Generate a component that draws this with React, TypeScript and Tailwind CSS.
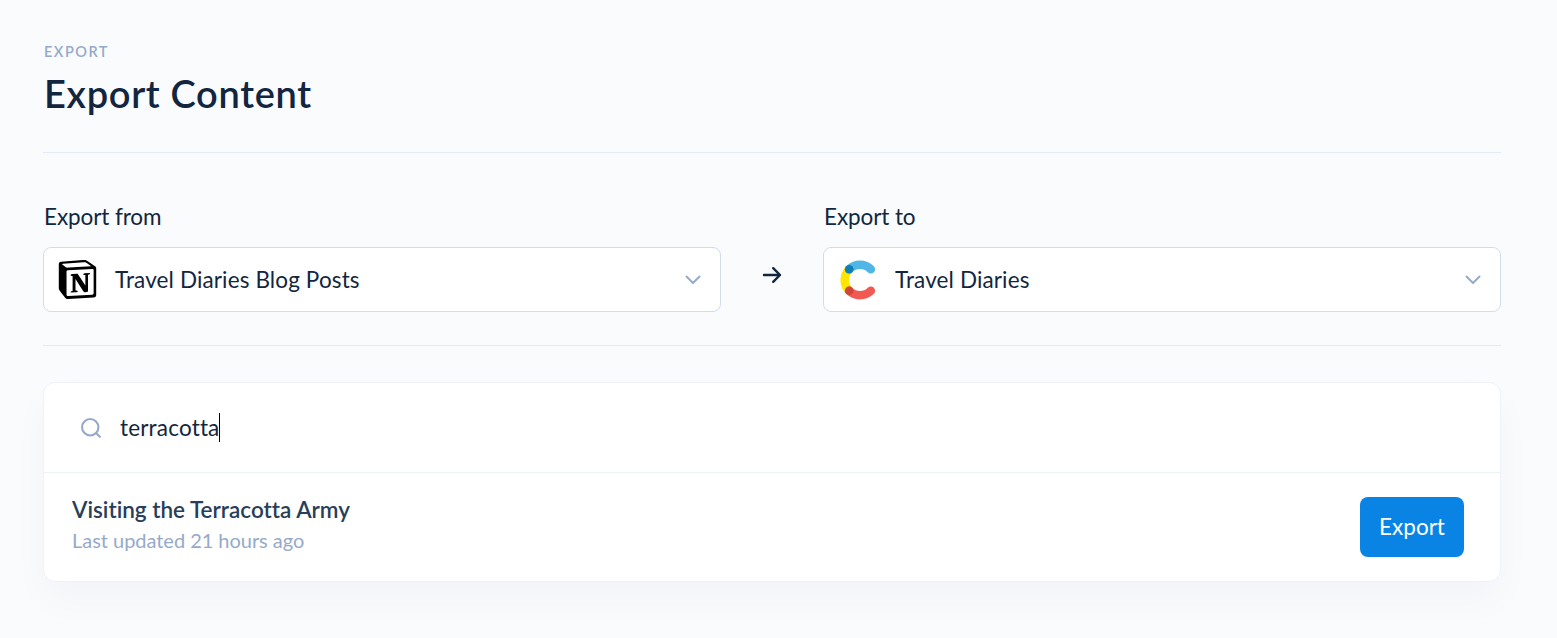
import { ReactNode } from "react";
import { SiNotion } from "react-icons/si";

function ContentfulLogo() {
  return (
    <svg width="40" height="40" viewBox="0 0 40 40" fill="none" strokeWidth="8.6" strokeLinecap="round" className="ml-[2px] shrink-0">
      <path d="M9.2 9.2A15.3 15.3 0 0 0 9.2 30.8" stroke="#ffe500" />
      <path d="M9.2 9.2A15.3 15.3 0 0 1 30.8 9.2" stroke="#50b6e6" />
      <path d="M9.2 30.8A15.3 15.3 0 0 0 30.8 30.8" stroke="#f15952" />
      <circle cx="9.2" cy="9.2" r="4.3" fill="#0f7fb8" />
      <circle cx="9.2" cy="30.8" r="4.3" fill="#cf473c" />
    </svg>
  );
}

function Chevron() {
  return (
    <svg width="16" height="10" viewBox="0 0 16 10" fill="none" stroke="#95aac9" strokeWidth="2" strokeLinecap="round" strokeLinejoin="round" className="shrink-0">
      <path d="M1.5 1.5 8 8l6.5-6.5" />
    </svg>
  );
}

function Picker({ label, logo, value }: { label: string; logo: ReactNode; value: string }) {
  return (
    <div className="w-[678px]">
      <div className="h-[30px] pl-px text-[22.5px] leading-[30px] tracking-[-0.1px]">{label}</div>
      <button className="mt-[15px] flex h-[65px] w-full items-center rounded-lg border border-[#d2ddec] bg-white pr-[19px] pl-[14px]">
        <span className="flex w-[57px] shrink-0 items-center">{logo}</span>
        <span className="flex-1 text-left text-[22.5px] tracking-[0.13px]">{value}</span>
        <Chevron />
      </button>
    </div>
  );
}

export default function App() {
  return (
    <main className="h-[638px] overflow-hidden bg-[#f9fbfd] pr-14 pl-[43px] font-['Lato',sans-serif] text-[#12263f] [font-variant-ligatures:none]">
      <header className="h-[153px] border-b border-[#e3ebf6] pt-[42px]">
        <div className="h-5 pl-px text-[14.5px] leading-5 font-semibold tracking-[1.5px] text-[#95aac9]">EXPORT</div>
        <h1 className="mt-[6px] pl-px text-[38px] leading-[50px] font-semibold tracking-[0.68px]">Export Content</h1>
      </header>

      <section className="flex h-[193px] border-b border-[#e3ebf6] pt-[49px]">
        <Picker label="Export from" value="Travel Diaries Blog Posts" logo={<SiNotion size={39} color="#000" />} />
        <div className="flex w-[102px] justify-center pt-16">
          <svg width="20" height="18" viewBox="0 0 20 18" fill="none" stroke="#12263f" strokeWidth="2.4" strokeLinecap="round" strokeLinejoin="round">
            <path d="M2 9h16M11.2 2.2 18 9l-6.8 6.8" />
          </svg>
        </div>
        <Picker label="Export to" value="Travel Diaries" logo={<ContentfulLogo />} />
      </section>

      <section className="mt-9 h-[200px] rounded-xl border border-[#edf2f9] bg-white shadow-[0_18px_36px_rgba(18,38,63,0.03)]">
        <div className="flex h-[90px] items-center border-b border-[#edf2f9] pl-[37px]">
          <svg width="20" height="20" viewBox="0 0 21 21" fill="none" stroke="#95aac9" strokeWidth="2.2" strokeLinecap="round">
            <circle cx="9.7" cy="9.7" r="8.6" />
            <path d="m16 16 3.8 3.8" />
          </svg>
          <span className="ml-[19px] text-[22.5px] tracking-[0.18px]">terracotta</span>
          <span className="h-[29px] w-px bg-black" />
        </div>
        <div className="flex h-[108px] items-center justify-between pr-9 pl-7">
          <div className="-mt-1">
            <div className="text-[22.5px] leading-[30px] font-semibold text-[#283e59]">Visiting the Terracotta Army</div>
            <div className="text-[20px] leading-[30px] tracking-[-0.03px] text-[#95aac9]">Last updated 21 hours ago</div>
          </div>
          <button className="h-[60px] w-[104px] rounded-lg bg-[#0a84e4] text-[22.5px] text-white">Export</button>
        </div>
      </section>
    </main>
  );
}
